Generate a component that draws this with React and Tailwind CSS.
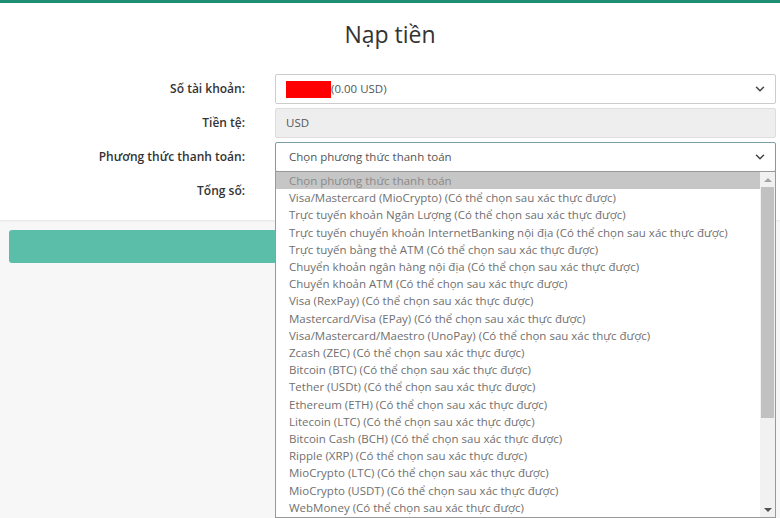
import { ChevronDown } from 'lucide-react'

const methods = [
  'Visa/Mastercard (MioCrypto) (Có thể chọn sau xác thực được)',
  'Trực tuyến khoản Ngân Lượng (Có thể chọn sau xác thực được)',
  'Trực tuyến chuyển khoản InternetBanking nội địa (Có thể chọn sau xác thực được)',
  'Trực tuyến bằng thẻ ATM (Có thể chọn sau xác thực được)',
  'Chuyển khoản ngân hàng nội địa (Có thể chọn sau xác thực được)',
  'Chuyển khoản ATM (Có thể chọn sau xác thực được)',
  'Visa (RexPay) (Có thể chọn sau xác thực được)',
  'Mastercard/Visa (EPay) (Có thể chọn sau xác thực được)',
  'Visa/Mastercard/Maestro (UnoPay) (Có thể chọn sau xác thực được)',
  'Zcash (ZEC) (Có thể chọn sau xác thực được)',
  'Bitcoin (BTC) (Có thể chọn sau xác thực được)',
  'Tether (USDt) (Có thể chọn sau xác thực được)',
  'Ethereum (ETH) (Có thể chọn sau xác thực được)',
  'Litecoin (LTC) (Có thể chọn sau xác thực được)',
  'Bitcoin Cash (BCH) (Có thể chọn sau xác thực được)',
  'Ripple (XRP) (Có thể chọn sau xác thực được)',
  'MioCrypto (LTC) (Có thể chọn sau xác thực được)',
  'MioCrypto (USDT) (Có thể chọn sau xác thực được)',
  'WebMoney (Có thể chọn sau xác thực được)',
]

function Label({ children }) {
  return (
    <div className="flex h-[30px] items-center justify-end pr-[30px] text-[12px] font-semibold text-[#333]">
      {children}
    </div>
  )
}

export default function App() {
  return (
    <div className="h-[518px] w-[780px] overflow-hidden bg-[#f7f7f7] font-['Open_Sans',sans-serif]">
      <div className="border-t-[3px] border-[#1f8e74] bg-white pb-[14px] shadow-[0_1px_2px_rgba(0,0,0,0.08)]">
        <h1 className="pt-[16px] text-center text-[23px] leading-[30px] text-[#333]">Nạp tiền</h1>

        <div className="relative mt-[25px] grid grid-cols-[275px_501px] gap-y-[4px]">
          <Label>Số tài khoản:</Label>
          <div className="flex h-[30px] items-center rounded-[2px] border border-[#ccc] bg-white pl-[10px] pr-[8px] text-[11.5px] text-[#555]">
            <span className="h-[17px] w-[45px] bg-[#ff0000]"></span>
            <span className="flex-1">(0.00 USD)</span>
            <ChevronDown size={14} strokeWidth={2.5} className="text-[#444]" />
          </div>

          <Label>Tiền tệ:</Label>
          <div className="flex h-[30px] items-center rounded-[2px] border border-[#ddd] bg-[#eee] pl-[10px] text-[11.5px] text-[#555]">
            USD
          </div>

          <Label>Phương thức thanh toán:</Label>
          <div className="flex h-[30px] items-center rounded-[2px] border border-[#7b9ea6] bg-white pl-[13px] pr-[8px] text-[11.5px] text-[#555]">
            <span className="flex-1">Chọn phương thức thanh toán</span>
            <ChevronDown size={14} strokeWidth={2.5} className="text-[#444]" />
          </div>

          <Label>Tổng số:</Label>
          <div className="h-[30px] rounded-[2px] border border-[#ccc] bg-white"></div>

          <div className="absolute left-[275px] top-[97px] z-10 flex h-[347px] w-[501px] border border-[#999] bg-white text-[11.5px] leading-[17.2px] text-[#707070]">
            <div className="flex-1">
              <div className="bg-[#c6c6c6] pl-[13px] text-[#8a8a8a]">Chọn phương thức thanh toán</div>
              {methods.map((m) => (
                <div key={m} className="whitespace-nowrap pl-[13px]">{m}</div>
              ))}
            </div>
            <div className="flex w-[15px] flex-col bg-[#f1f1f1]">
              <div className="flex h-[15px] items-center justify-center">
                <span className="h-0 w-0 border-x-[4px] border-b-[4px] border-x-transparent border-b-[#a3a3a3]"></span>
              </div>
              <div className="mx-[1px] h-[231px] bg-[#c1c1c1]"></div>
              <div className="flex-1"></div>
              <div className="flex h-[15px] items-center justify-center">
                <span className="h-0 w-0 border-x-[4px] border-t-[4px] border-x-transparent border-t-[#505050]"></span>
              </div>
            </div>
          </div>
        </div>
      </div>

      <div className="px-[9px] pt-[10px]">
        <div className="h-[33px] rounded-[3px] bg-[#5bbea8]"></div>
      </div>
    </div>
  )
}
